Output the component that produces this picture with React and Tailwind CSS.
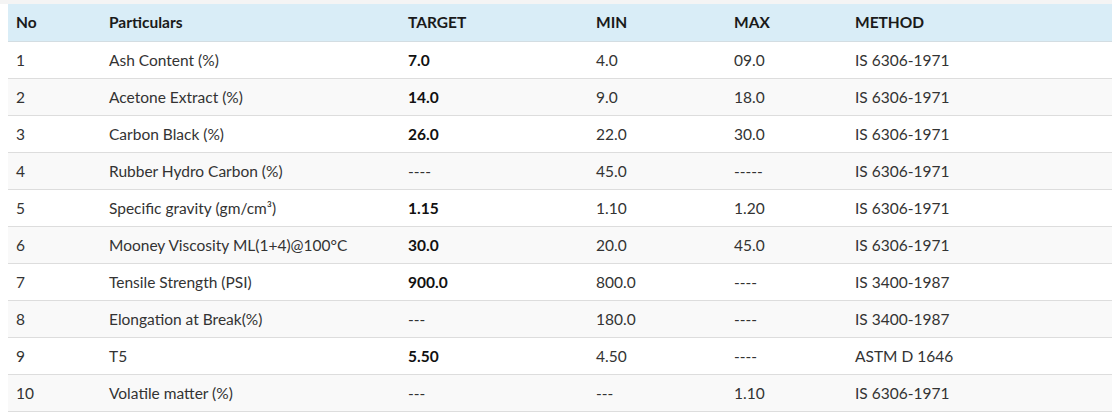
const rows = [
  ['1', 'Ash Content (%)', '7.0', '4.0', '09.0', 'IS 6306-1971', true],
  ['2', 'Acetone Extract (%)', '14.0', '9.0', '18.0', 'IS 6306-1971', true],
  ['3', 'Carbon Black (%)', '26.0', '22.0', '30.0', 'IS 6306-1971', true],
  ['4', 'Rubber Hydro Carbon (%)', '----', '45.0', '-----', 'IS 6306-1971', false],
  ['5', 'Specific gravity (gm/cm³)', '1.15', '1.10', '1.20', 'IS 6306-1971', true],
  ['6', 'Mooney Viscosity ML(1+4)@100°C', '30.0', '20.0', '45.0', 'IS 6306-1971', true],
  ['7', 'Tensile Strength (PSI)', '900.0', '800.0', '----', 'IS 3400-1987', true],
  ['8', 'Elongation at Break(%)', '---', '180.0', '----', 'IS 3400-1987', false],
  ['9', 'T5', '5.50', '4.50', '----', 'ASTM D 1646', true],
  ['10', 'Volatile matter (%)', '---', '---', '1.10', 'IS 6306-1971', false],
];

export default function App() {
  return (
    <div className="w-[1112px] h-[420px] bg-white overflow-hidden" style={{ fontFamily: 'Lato, sans-serif' }}>
      <div className="h-[4px] bg-[#f4f4f4]" />
      <div className="pl-[8px]">
        <table className="w-[1104px] border-collapse table-fixed text-[15.5px] leading-[20px] text-[#333]">
          <colgroup>
            <col className="w-[93px]" />
            <col className="w-[299px]" />
            <col className="w-[188px]" />
            <col className="w-[138px]" />
            <col className="w-[121px]" />
            <col />
          </colgroup>
          <thead>
            <tr className="bg-[#d9edf7] border-b border-[#d3dde2]">
              {['No', 'Particulars', 'TARGET', 'MIN', 'MAX', 'METHOD'].map((h) => (
                <th key={h} className="text-left font-bold text-[#1a1a1a] px-[8px] h-[37px] py-0 align-middle">
                  {h}
                </th>
              ))}
            </tr>
          </thead>
          <tbody>
            {rows.map((r, i) => (
              <tr key={r[0]} className={`border-b border-[#dddddd] ${i % 2 === 1 ? 'bg-[#f9f9f9]' : 'bg-white'}`}>
                <td className="px-[8px] h-[37px] py-0 align-middle">{r[0]}</td>
                <td className="px-[8px] h-[37px] py-0 align-middle">{r[1]}</td>
                <td className={`px-[8px] h-[37px] py-0 align-middle ${r[6] ? 'font-bold text-[#111]' : ''}`}>{r[2]}</td>
                <td className="px-[8px] h-[37px] py-0 align-middle">{r[3]}</td>
                <td className="px-[8px] h-[37px] py-0 align-middle">{r[4]}</td>
                <td className="px-[8px] h-[37px] py-0 align-middle">{r[5]}</td>
              </tr>
            ))}
          </tbody>
        </table>
      </div>
    </div>
  );
}
